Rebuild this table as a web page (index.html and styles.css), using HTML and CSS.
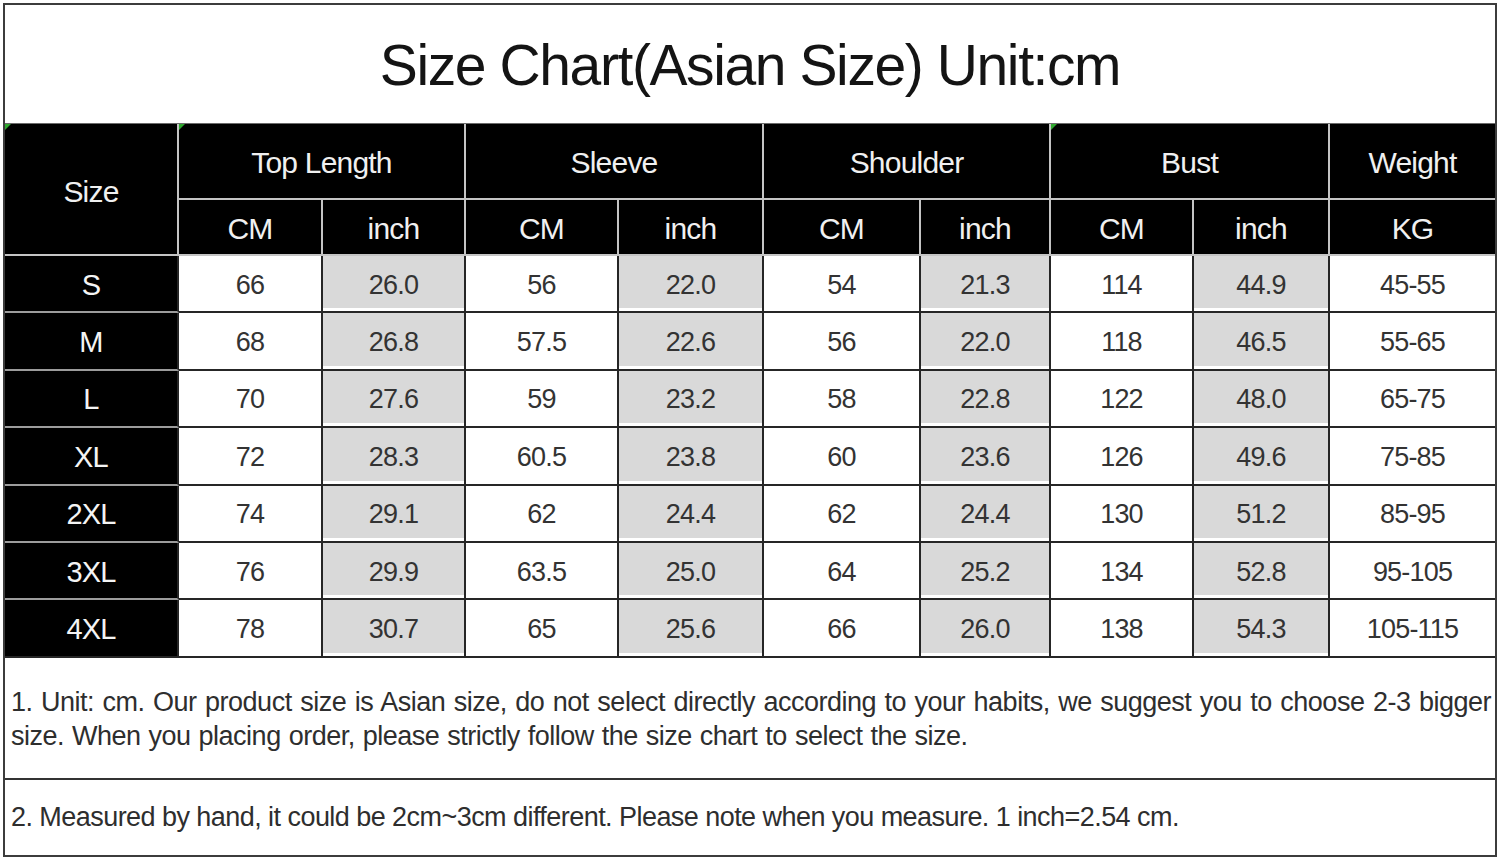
FILE: index.html
```
<!DOCTYPE html>
<html lang="en">
<head>
<meta charset="utf-8">
<title>Size Chart</title>
<link rel="stylesheet" href="styles.css">
</head>
<body>
<div class="chart">
  <div class="title">Size Chart(Asian Size) Unit:cm</div>
  <table class="grid">
    <colgroup>
      <col class="c-size"><col class="c2"><col class="c3"><col class="c4"><col class="c5"><col class="c6"><col class="c7"><col class="c8"><col class="c9"><col class="c10">
    </colgroup>
    <thead>
      <tr class="h1">
        <th rowspan="2" class="mark first">Size</th>
        <th colspan="2" class="mark">Top Length</th>
        <th colspan="2">Sleeve</th>
        <th colspan="2">Shoulder</th>
        <th colspan="2" class="mark">Bust</th>
        <th class="last">Weight</th>
      </tr>
      <tr class="h2">
        <th>CM</th><th>inch</th>
        <th>CM</th><th>inch</th>
        <th>CM</th><th>inch</th>
        <th>CM</th><th>inch</th>
        <th class="last">KG</th>
      </tr>
    </thead>
    <tbody>
      <tr><td class="size">S</td><td>66</td><td class="g">26.0</td><td>56</td><td class="g">22.0</td><td>54</td><td class="g">21.3</td><td>114</td><td class="g">44.9</td><td class="last">45-55</td></tr>
      <tr><td class="size">M</td><td>68</td><td class="g">26.8</td><td>57.5</td><td class="g">22.6</td><td>56</td><td class="g">22.0</td><td>118</td><td class="g">46.5</td><td class="last">55-65</td></tr>
      <tr><td class="size">L</td><td>70</td><td class="g">27.6</td><td>59</td><td class="g">23.2</td><td>58</td><td class="g">22.8</td><td>122</td><td class="g">48.0</td><td class="last">65-75</td></tr>
      <tr><td class="size">XL</td><td>72</td><td class="g">28.3</td><td>60.5</td><td class="g">23.8</td><td>60</td><td class="g">23.6</td><td>126</td><td class="g">49.6</td><td class="last">75-85</td></tr>
      <tr><td class="size">2XL</td><td>74</td><td class="g">29.1</td><td>62</td><td class="g">24.4</td><td>62</td><td class="g">24.4</td><td>130</td><td class="g">51.2</td><td class="last">85-95</td></tr>
      <tr><td class="size">3XL</td><td>76</td><td class="g">29.9</td><td>63.5</td><td class="g">25.0</td><td>64</td><td class="g">25.2</td><td>134</td><td class="g">52.8</td><td class="last">95-105</td></tr>
      <tr><td class="size">4XL</td><td>78</td><td class="g">30.7</td><td>65</td><td class="g">25.6</td><td>66</td><td class="g">26.0</td><td>138</td><td class="g">54.3</td><td class="last">105-115</td></tr>
    </tbody>
  </table>
  <div class="note note1"><p>1. Unit: cm. Our product size is Asian size, do not select directly according to your habits, we suggest you to choose 2-3 bigger size. When you placing order, please strictly follow the size chart to select the size.</p></div>
  <div class="note note2"><p>2. Measured by hand, it could be 2cm~3cm different. Please note when you measure. 1 inch=2.54 cm.</p></div>
</div>
</body>
</html>
```
FILE: styles.css
```
html, body {
  margin: 0;
  padding: 0;
  background: #ffffff;
}

body {
  font-family: "Liberation Sans", Arial, sans-serif;
  color: #333333;
}

.chart {
  width: 1490px;
  margin: 3px 0 0 3px;
  border: 2px solid #3c3c3c;
  background: #ffffff;
}

.title {
  height: 119px;
  box-sizing: border-box;
  border-bottom: 1px solid #6a6a6a;
  display: flex;
  align-items: center;
  justify-content: center;
  font-size: 57px;
  letter-spacing: -1.4px;
  color: #141414;
  padding-top: 2px;
}

.grid {
  width: 1490px;
  table-layout: fixed;
  border-collapse: separate;
  border-spacing: 0;
}

.c-size { width: 174px; }
.c2 { width: 144px; }
.c3 { width: 143px; }
.c4 { width: 153px; }
.c5 { width: 145px; }
.c6 { width: 157px; }
.c7 { width: 130px; }
.c8 { width: 143px; }
.c9 { width: 136px; }
.c10 { width: 165px; }

.grid th {
  background: #000000;
  color: #f0f0f0;
  font-weight: normal;
  font-size: 30px;
  letter-spacing: -0.8px;
  padding: 0;
  border-right: 2px solid #c4c4c4;
  border-bottom: 2px solid #c4c4c4;
  text-align: center;
  vertical-align: middle;
  position: relative;
}

.grid tr.h1 { height: 76px; }
.grid tr.h2 { height: 56px; }
.grid tr.h1 th { padding-top: 3px; }
.grid tr.h1 th.first { padding-top: 6px; }
.grid tr.h2 th { padding-top: 3px; }

.grid th.mark::before {
  content: "";
  position: absolute;
  left: 0;
  top: 0;
  width: 0;
  height: 0;
  border-top: 6px solid #2fa82f;
  border-right: 6px solid transparent;
}

.grid tbody tr { height: 57.4px; }

.grid td {
  padding: 3px 0 0 0;
  font-size: 27px;
  letter-spacing: -0.8px;
  color: #333333;
  text-align: center;
  vertical-align: middle;
  border-right: 2px solid #262626;
  border-bottom: 2px solid #262626;
  background: #ffffff;
}

.grid td.size {
  background: #000000;
  color: #f4f4f4;
  font-size: 29px;
  letter-spacing: -0.8px;
  border-bottom: 2px solid #9c9c9c;
  border-right: 2px solid #262626;
}

.grid tbody tr:last-child td.size {
  border-bottom: 2px solid #262626;
}

.grid td.g {
  background: #d9d9d9;
  box-shadow: inset 0 -3px 0 #ffffff;
}

.grid .last {
  border-right: none;
}

.note {
  display: flex;
  align-items: center;
  padding: 0 4px 0 6px;
  box-sizing: border-box;
  font-size: 27px;
  letter-spacing: -0.4px;
  color: #2e2e2e;
}

.note p {
  margin: 0;
  width: 100%;
  line-height: 34px;
  text-align: justify;
  text-align-last: left;
}

.note1 {
  height: 120px;
  padding-top: 2px;
}

.note1 p {
  letter-spacing: -0.5px;
  word-spacing: 1px;
}

.note2 {
  height: 77px;
  border-top: 2px solid #333333;
  letter-spacing: -0.55px;
}
```
